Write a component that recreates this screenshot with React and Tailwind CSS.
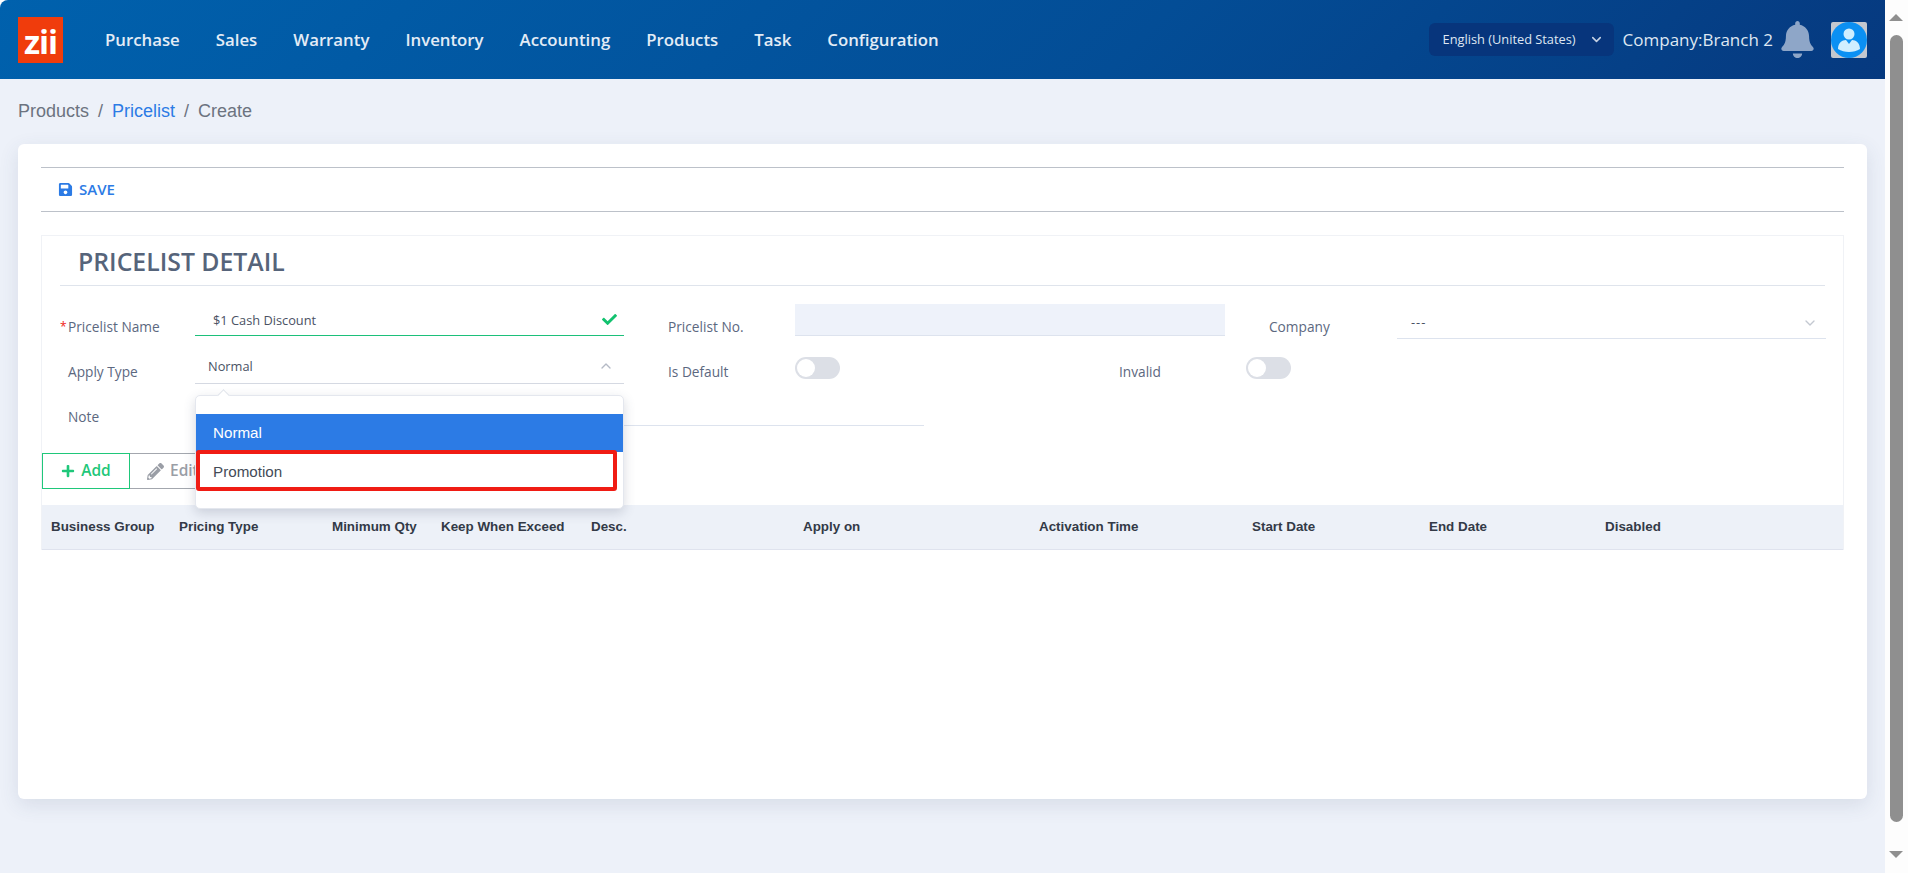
import React from "react";
import { ChevronDown, ChevronUp } from "lucide-react";
import { FaBell, FaCheck, FaPencilAlt, FaPlus, FaSave } from "react-icons/fa";

const navItems = [
  "Purchase",
  "Sales",
  "Warranty",
  "Inventory",
  "Accounting",
  "Products",
  "Task",
  "Configuration",
];

const columns = [
  { label: "Business Group", width: "w-[128px]" },
  { label: "Pricing Type", width: "w-[153px]" },
  { label: "Minimum Qty", width: "w-[109px]" },
  { label: "Keep When Exceed", width: "w-[150px]" },
  { label: "Desc.", width: "w-[212px]" },
  { label: "Apply on", width: "w-[236px]" },
  { label: "Activation Time", width: "w-[213px]" },
  { label: "Start Date", width: "w-[177px]" },
  { label: "End Date", width: "w-[176px]" },
  { label: "Disabled", width: "w-[120px]" },
];

function FieldLabel({ children, required, className }) {
  return (
    <div
      className={`mt-[14px] flex h-[18px] shrink-0 items-center text-[13.7px] font-medium leading-[18px] text-[#5c6880] ${className}`}
    >
      {required && <span className="w-[8px] text-[12px] text-[#f01c14]">*</span>}
      {children}
    </div>
  );
}

function Toggle() {
  return (
    <div className="mt-[8px] h-[22px] w-[45px] shrink-0 rounded-full bg-[#dcdfe6] p-[2px]">
      <div className="h-[18px] w-[18px] rounded-full bg-white" />
    </div>
  );
}

function Header() {
  return (
    <header className="flex h-[79px] items-center bg-[linear-gradient(135deg,#0061ad_0%,#034d96_60%,#06397f_100%)] pl-[18px] pr-[18px] font-['Open_Sans',sans-serif] text-white">
      <div className="flex h-[46px] w-[45px] shrink-0 items-end justify-center overflow-hidden bg-[#f03c0c] pb-[3px] text-[33px] font-bold leading-[36px] tracking-[-1px]">
        zii
      </div>
      <nav className="ml-[42px] flex items-center gap-[36px] text-[16.8px] font-semibold text-[#e3ecf6]">
        {navItems.map((item) => (
          <span key={item}>{item}</span>
        ))}
      </nav>
      <div className="ml-auto flex h-[33px] w-[185px] items-center justify-between rounded-[6px] bg-[#07357c] pl-[14px] pr-[10px] text-[12.8px] text-[#dfe7f2]">
        English (United States)
        <ChevronDown size={15} strokeWidth={2.5} className="text-[#c5d1e3]" />
      </div>
      <span className="ml-[9px] text-[17px] text-[#dfe7f2]">Company:Branch 2</span>
      <FaBell size={37} className="ml-[6px] text-[#8ea6c8]" />
      <div className="ml-[15px] flex h-[36px] w-[36px] items-center justify-center rounded-[2px] bg-[#c4c8cf]">
        <svg viewBox="0 0 36 36" className="h-[36px] w-[36px]">
          <circle cx="18" cy="18" r="18" fill="#0b90f3" />
          <circle cx="18" cy="12" r="5.5" fill="#cfeeff" />
          <path d="M7 27c0-6 4-9 8-9l3 4 3-4c4 0 8 3 8 9-3 2-7 3-11 3s-8-1-11-3z" fill="#cfeeff" />
        </svg>
      </div>
    </header>
  );
}

function ApplyTypeMenu() {
  return (
    <div className="absolute left-0 top-[46px] z-10 w-[429px] rounded-[5px] border border-[#e4e7ee] bg-white py-[18px] font-['Liberation_Sans',sans-serif] text-[15.2px] shadow-[0_4px_12px_rgba(60,70,100,0.2)]">
      <div className="absolute left-[23px] top-[-5px] h-[9px] w-[9px] rotate-45 border-l border-t border-[#dfe3ea] bg-white" />
      <div className="flex h-[38px] items-center bg-[#2c7be5] pl-[17px] pt-[1px] text-white">Normal</div>
      <div className="flex h-[38px] items-center pl-[17px] pt-[3px] text-[#444b57]">Promotion</div>
      {/* annotation frame from the screenshot */}
      <div className="absolute left-0 top-[54px] h-[41px] w-[421px] rounded-[3px] border-[4px] border-[#f01c14]" />
    </div>
  );
}

function PricelistForm() {
  return (
    <div className="pl-[18px] pr-[17px] font-['Open_Sans',sans-serif]">
      <div className="mt-[18px] flex h-[32px]">
        <FieldLabel required className="w-[135px]">Pricelist Name</FieldLabel>
        <div className="flex w-[429px] shrink-0 items-center justify-between border-b border-[#1cc07a] pl-[18px] pr-[7px] pt-[2px] text-[12.8px] text-[#4a5264]">
          $1 Cash Discount
          <FaCheck size={15} className="mb-[3px] text-[#12c26f]" />
        </div>
        <FieldLabel className="ml-[44px] w-[127px]">Pricelist No.</FieldLabel>
        <div className="w-[430px] shrink-0 border-b border-[#dde3ee] bg-[#eef2fa]" />
        <FieldLabel className="ml-[44px] w-[128px]">Company</FieldLabel>
        <div className="flex h-[35px] flex-1 items-center justify-between border-b border-[#dde3ee] pl-[14px] pr-[8px] pt-[4px] text-[12.8px] text-[#4a5264]">
          <span className="tracking-[1px]">---</span>
          <ChevronDown size={16} className="text-[#c3c8d1]" />
        </div>
      </div>
      <div className="mt-[13px] flex h-[35px]">
        <FieldLabel className="w-[135px] pl-[8px]">Apply Type</FieldLabel>
        <div className="relative w-[429px] shrink-0">
          <div className="flex h-[35px] items-center justify-between border-b border-[#d5d9e2] pl-[13px] pr-[10px] pt-[2px] text-[12.8px] text-[#4a5264]">
            Normal
            <ChevronUp size={16} className="mb-[2px] text-[#b4bac5]" />
          </div>
          <ApplyTypeMenu />
        </div>
        <FieldLabel className="ml-[44px] w-[127px]">Is Default</FieldLabel>
        <Toggle />
        <FieldLabel className="ml-[279px] w-[127px]">Invalid</FieldLabel>
        <Toggle />
      </div>
      <div className="mt-[10px] flex h-[32px]">
        <FieldLabel className="w-[135px] pl-[8px]">Note</FieldLabel>
        <div className="w-[729px] border-b border-[#dde3ee]" />
      </div>
    </div>
  );
}

function PricelistDetail() {
  return (
    <section className="mt-[23px] border border-b-0 border-[#f0f2f6]">
      <div className="ml-[18px] mr-[18px] flex h-[50px] items-center border-b border-[#dfe4ec] pl-[18px] pt-[3px] font-['Open_Sans',sans-serif] text-[24.8px] font-semibold text-[#56647a]">
        PRICELIST DETAIL
      </div>
      <PricelistForm />
      <div className="mt-[27px] flex h-[36px] font-['Open_Sans',sans-serif] text-[15.5px] font-semibold">
        <div className="flex w-[88px] items-center justify-center gap-[6px] border border-[#1fc77a] text-[#1fc77a]">
          <FaPlus size={14} />
          Add
        </div>
        <div className="flex w-[88px] items-center gap-[6px] border border-l-0 border-[#a3a7ae] pl-[17px] text-[#9a9ea6]">
          <FaPencilAlt size={17} />
          Edit
        </div>
      </div>
      <div className="mt-[16px] flex h-[45px] items-center border-b border-[#dfe3ee] bg-[#edf1f8] pl-[9px] font-['Liberation_Sans',sans-serif] text-[13.4px] font-bold text-[#333a47]">
        {columns.map((col) => (
          <div key={col.label} className={`shrink-0 ${col.width}`}>
            {col.label}
          </div>
        ))}
      </div>
    </section>
  );
}

function Scrollbar() {
  return (
    <div className="flex h-full w-[23px] shrink-0 flex-col items-center bg-[#fdfdfd] pr-[1px]">
      <div className="mt-[14px] h-0 w-0 border-x-[7px] border-b-[7px] border-x-transparent border-b-[#8f8f8f]" />
      <div className="mt-[14px] h-[787px] w-[13px] rounded-full bg-[#8f8f8f]" />
      <div className="mt-[29px] h-0 w-0 border-x-[7px] border-t-[7px] border-x-transparent border-t-[#8f8f8f]" />
    </div>
  );
}

export default function App() {
  return (
    <div className="flex h-[873px] w-[1908px] overflow-hidden">
      <div className="h-full w-[1885px] shrink-0 overflow-hidden rounded-tl-[8px] bg-[#edf1f9]">
        <Header />
        <div className="flex h-[65px] items-center gap-[9px] pl-[18px] font-['Liberation_Sans',sans-serif] text-[18px] text-[#6c7380]">
          <span>Products</span>
          <span>/</span>
          <span className="text-[#2c7be5]">Pricelist</span>
          <span>/</span>
          <span>Create</span>
        </div>
        <main className="mx-[18px] h-[655px] rounded-[6px] bg-white px-[23px] pt-[23px] shadow-[0_6px_20px_rgba(60,70,110,0.12)]">
          <div className="flex h-[45px] items-center gap-[6px] border-y border-[#bcc1c9] pl-[17px] font-['Open_Sans',sans-serif] text-[15px] font-semibold text-[#2c7be5]">
            <FaSave size={15} />
            SAVE
          </div>
          <PricelistDetail />
        </main>
      </div>
      <Scrollbar />
    </div>
  );
}
